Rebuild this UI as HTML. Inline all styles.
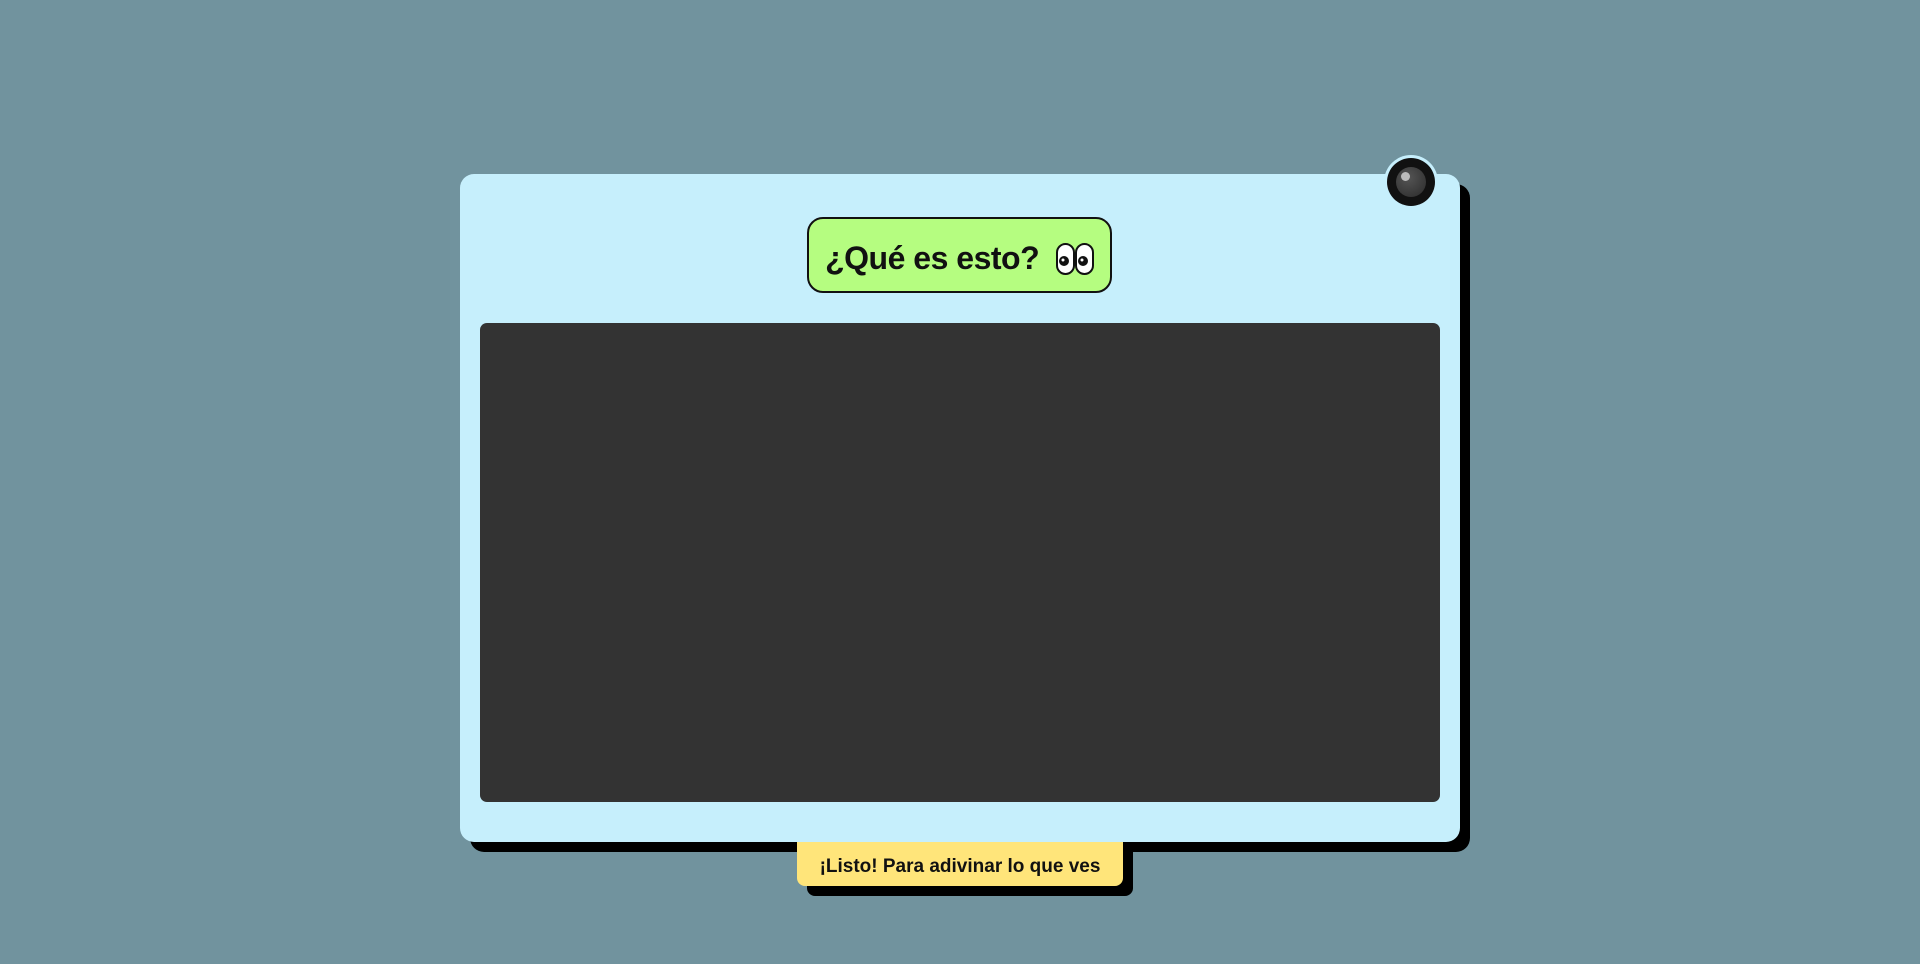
<!DOCTYPE html>
<html><head><meta charset="utf-8"><style>
html,body{margin:0;padding:0;width:1920px;height:964px;background:#71939e;overflow:hidden;font-family:"Liberation Sans",sans-serif}
.shadow{position:absolute;left:470px;top:184px;width:1000px;height:668px;background:#000;border-radius:14px}
.card{position:absolute;left:460px;top:174px;width:1000px;height:668px;background:#c6effc;border-radius:14px}
.pill{position:absolute;left:807px;top:217px;width:301px;height:72px;box-sizing:content-box;background:#b5fd80;border:2px solid #111;border-radius:16px;display:flex;align-items:center;justify-content:center;font-weight:bold;font-size:32px;color:#111;letter-spacing:-0.5px;padding-top:0}
.pill span{position:relative;top:3px}
.screen{position:absolute;left:480px;top:323px;width:960px;height:479px;background:#333;border-radius:7px}
.cam{position:absolute;left:1384px;top:155px;width:54px;height:54px;border-radius:50%;background:#c6effc}
.cam .o{position:absolute;left:3px;top:3px;width:48px;height:48px;border-radius:50%;background:#111}
.cam .i{position:absolute;left:9px;top:9px;width:30px;height:30px;border-radius:50%;background:radial-gradient(circle at 40% 35%,#555,#2a2a2a)}
.cam .d{position:absolute;left:14px;top:14px;width:9px;height:9px;border-radius:50%;background:#bbb}
.bshadow{position:absolute;left:807px;top:852px;width:326px;height:44px;background:#000;border-radius:0 0 8px 8px}
.btn{position:absolute;left:797px;top:842px;width:326px;height:44px;background:#ffe57a;border-radius:0 0 8px 8px;display:flex;align-items:center;justify-content:center;font-weight:bold;font-size:19px;color:#111}
.btn span{position:relative;top:3px}
</style></head><body>
<div class="shadow"></div>
<div class="bshadow"></div>
<div class="card"></div>
<div class="btn"><span>¡Listo! Para adivinar lo que ves</span></div>
<div class="pill"><span>¿Qué es esto?</span>&nbsp;&nbsp;<svg style="position:relative;top:4px" width="38" height="32" viewBox="0 0 38 32"><rect x="1" y="1" width="17" height="30" rx="8.5" fill="#fff" stroke="#111" stroke-width="2"/><rect x="20" y="1" width="17" height="30" rx="8.5" fill="#fff" stroke="#111" stroke-width="2"/><circle cx="8" cy="18" r="5" fill="#111"/><circle cx="27" cy="18" r="5" fill="#111"/><circle cx="7" cy="17" r="1.5" fill="#fff"/><circle cx="26" cy="17" r="1.5" fill="#fff"/></svg></div>
<div class="screen"></div>
<div class="cam"><div class="o"><div class="i"></div><div class="d"></div></div></div>
</body></html>
